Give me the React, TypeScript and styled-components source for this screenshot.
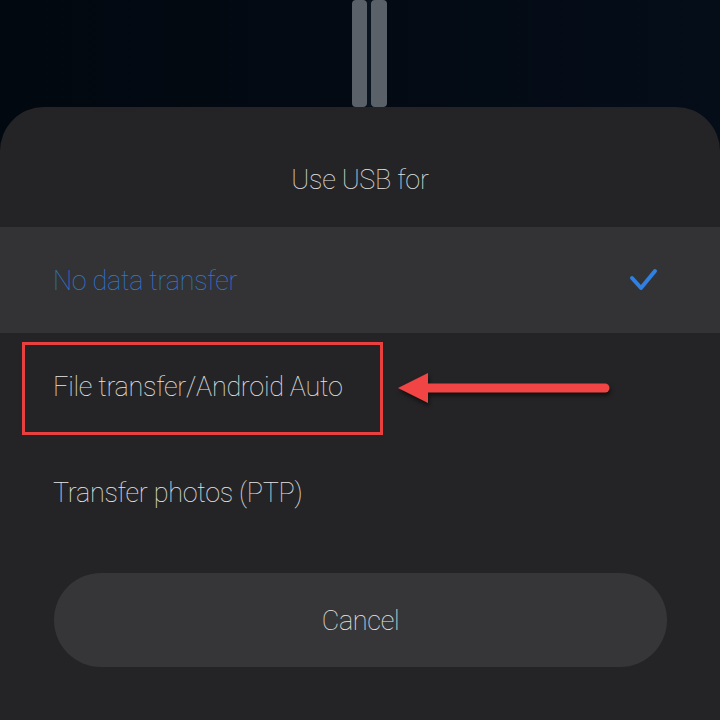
import React from 'react';
import styled, { createGlobalStyle } from 'styled-components';

const GlobalStyle = createGlobalStyle`
  html, body {
    margin: 0;
    padding: 0;
    background: #030a14;
  }
`;

const Page = styled.div`
  width: 720px;
  height: 720px;
  display: flex;
  flex-direction: column;
  overflow: hidden;
  background: linear-gradient(90deg, #020810 0%, #030a13 50%, #050d19 100%);
  font-family: Roboto, 'Liberation Sans', sans-serif;
`;

const Backdrop = styled.div`
  height: 107px;
  flex-shrink: 0;
  display: flex;
  justify-content: center;
`;

const Sheet = styled.div`
  flex: 1;
  background: #242426;
  border-radius: 44px 44px 0 0;
  display: flex;
  flex-direction: column;
`;

const Title = styled.div`
  height: 120px;
  display: flex;
  align-items: center;
  justify-content: center;
  color: #e2e2e2;
  font-size: 27px;
  font-weight: 100;
  letter-spacing: -0.3px;
  padding-top: 26px;
  box-sizing: border-box;
`;

const Option = styled.div<{ $active?: boolean }>`
  position: relative;
  height: 106px;
  display: flex;
  align-items: center;
  justify-content: space-between;
  padding: 2px 61px 0 53px;
  box-sizing: border-box;
  background: ${(p) => (p.$active ? '#333335' : 'transparent')};
  color: ${(p) => (p.$active ? '#2f78d0' : '#e6e6e6')};
  font-size: 27px;
  font-weight: 100;
  letter-spacing: -0.3px;
`;

const Highlight = styled.div`
  position: absolute;
  left: 22px;
  top: 9px;
  width: 361px;
  height: 93px;
  border: 3px solid #e8403f;
  box-sizing: border-box;
`;

const Arrow = styled.svg`
  position: absolute;
  left: 396px;
  top: 38px;
  filter: drop-shadow(1px 3px 2px rgba(0, 0, 0, 0.55));
`;

const CancelButton = styled.div`
  margin: 28px 53px 0 54px;
  height: 94px;
  border-radius: 47px;
  background: #363638;
  display: flex;
  align-items: center;
  justify-content: center;
  color: #e6e6e6;
  font-size: 27px;
  font-weight: 100;
  letter-spacing: -0.3px;
  padding-top: 2px;
  box-sizing: border-box;
`;

function Cable() {
  return (
    <svg width="60" height="107" viewBox="0 0 60 107">
      <rect x="22" y="0" width="15" height="107" rx="4" fill="#5b6169" />
      <rect x="41" y="0" width="16" height="107" rx="4" fill="#5b6169" />
      <rect x="37" y="0" width="4" height="107" fill="#0a1420" />
    </svg>
  );
}

function Check() {
  return (
    <svg width="30" height="26" viewBox="0 0 30 26">
      <path
        d="M3 10 L12 20 L26 3"
        fill="none"
        stroke="#2f80e0"
        strokeWidth="4"
        strokeLinecap="round"
        strokeLinejoin="round"
      />
    </svg>
  );
}

function App() {
  return (
    <Page>
      <GlobalStyle />
      <Backdrop>
        <Cable />
      </Backdrop>
      <Sheet>
        <Title>Use USB for</Title>
        <Option $active>
          <span>No data transfer</span>
          <Check />
        </Option>
        <Option>
          <span>File transfer/Android Auto</span>
          <Highlight />
          <Arrow width="216" height="34" viewBox="0 0 216 34">
            <path d="M2 17 L32 2 L32 32 Z" fill="#f14545" />
            <line x1="30" y1="17" x2="209" y2="17" stroke="#f14545" strokeWidth="9" strokeLinecap="round" />
          </Arrow>
        </Option>
        <Option>
          <span>Transfer photos (PTP)</span>
        </Option>
        <CancelButton>Cancel</CancelButton>
      </Sheet>
    </Page>
  );
}

export default App;
